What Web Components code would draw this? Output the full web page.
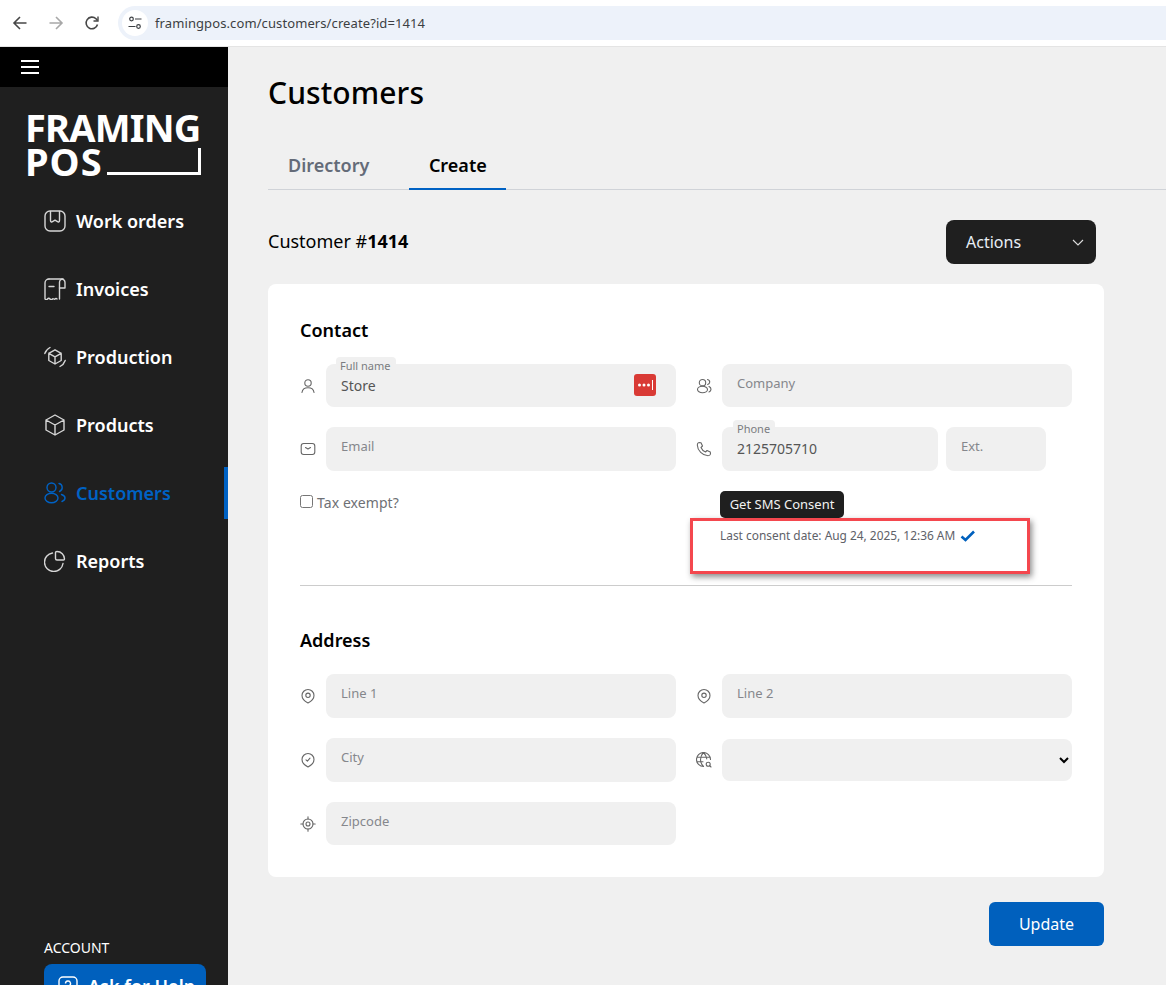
<!DOCTYPE html>
<html lang="en">
<head>
<meta charset="utf-8">
<title>Customers</title>
<style>
    html, body { margin: 0; padding: 0; background: #f0f0f0; }
    body { font-family: "Noto Sans", "Open Sans", sans-serif; }
</style>
</head>
<body>
<app-shell>
    <browser-bar slot="bar">framingpos.com/customers/create?id=1414</browser-bar>
    <side-nav slot="side">
        <nav-item icon="orders">Work orders</nav-item>
        <nav-item icon="invoice">Invoices</nav-item>
        <nav-item icon="production">Production</nav-item>
        <nav-item icon="box">Products</nav-item>
        <nav-item icon="people" active>Customers</nav-item>
        <nav-item icon="pie">Reports</nav-item>
    </side-nav>
    <customer-page slot="main"></customer-page>
</app-shell>

<script>
// 图标
const ICONS = {
    orders: '<rect x="1" y="1" width="20" height="20" rx="5"/><path d="M6.5 1.5v9c0 1.3 1 1.8 2 1.2l2.5-1.5 2.5 1.5c1 .6 2 .1 2-1.2v-9"/>',
    invoice: '<path d="M5 1h12.500a3.500 3.500 0 0 1 3.500 3.500v5.500h-5.500"/><path d="M15.500 21V4.500A3.500 3.500 0 0 1 19 1M5 1a4 4 0 0 0-4 4v16c1.200 1 1.800 1 2.500 0s1.800-1 2.500 0 1.800 1 2.500 0 1.800 1 2.500 0 1.500-.6 2 0"/><path d="M5 8.500h5"/>',
    production: '<path d="M11 3.800l6.200 3.500v7.200L11 18l-6.200-3.500V7.300zM4.800 7.300l6.200 3.600 6.200-3.600M11 10.900V18"/><path d="M.8 7.500A10.500 10.500 0 0 1 6 1.500M21.200 14.500A10.500 10.500 0 0 1 16 20.500"/>',
    box: '<path d="M11 1l9 5v10l-9 5-9-5V6zM2 6l9 5 9-5M11 11v10"/>',
    people: '<circle cx="7.500" cy="5.500" r="4.500"/><ellipse cx="7.500" cy="16" rx="6.500" ry="4.800"/><path d="M15 1.500a4.200 4.200 0 0 1 .5 8M17.500 12.500c2.500.8 3.500 2.200 3.500 3.500s-1 2.700-3 3.500"/>',
    pie: '<path d="M8.500 3A9.300 9.300 0 1 0 19 13.500"/><path d="M13 1.500a7.500 7.500 0 0 1 7.500 7.500c0 .6-.4 1-1 1H13a1.500 1.500 0 0 1-1.500-1.500V2.500c0-.6.900-1 1.500-1z"/>',
    user: '<circle cx="8" cy="5" r="3.200"/><path d="M2 14.500c.3-3 2.800-4.800 6-4.800s5.700 1.800 6 4.800"/>',
    mail: '<rect x="1.200" y="2.500" width="13.600" height="11" rx="2.500"/><path d="M5.500 6.500L8 8l2.500-1.500"/>',
    company: '<circle cx="6.500" cy="4.700" r="3.200"/><ellipse cx="6.500" cy="11.500" rx="5" ry="3.300"/><path d="M11.500 1.500c1.500.3 2.300 1.600 2.200 2.800-.1 1-.8 1.900-2 2.300M13 8.500c1.300.6 2 1.600 2 2.800s-.8 2.200-2 2.700"/>',
    phone: '<path d="M3 1.500l2 .2 1.500 3.300-1.500 1.500c.8 2 2.500 3.700 4.500 4.500l1.500-1.500 3.300 1.500.2 2c-.2 1-1.200 1.700-2.500 1.700C6.500 14.500 1.500 9.500 1.300 4c0-1.300.7-2.300 1.700-2.500z"/>',
    pin: '<path d="M8 15c-3-1.500-6-4.200-6-7.500a6 6 0 0 1 12 0C14 10.800 11 13.500 8 15z"/><circle cx="8" cy="7.300" r="2.200"/>',
    pincheck: '<path d="M8 15c-3-1.500-6-4.200-6-7.500a6 6 0 0 1 12 0C14 10.800 11 13.500 8 15z"/><path d="M6 7.800l1.400 1.300 2.600-3"/>',
    target: '<circle cx="8" cy="8" r="5"/><circle cx="8" cy="8" r="2"/><path d="M8 .8V3M8 13v2.200M.8 8H3M13 8h2.200"/>',
    globe: '<path d="M7.500 14.500a7 7 0 1 1 7-7M1 5.200h13M1 9.800h6M7.500.5c-4 4-4 10 0 14M7.500.5c2 2 3 4 3.300 6.500"/><circle cx="12.200" cy="12.200" r="2"/><path d="M13.700 13.700l1.300 1.300"/>'
};

function svgIcon(name, size) {
    const box = size > 16 ? 22 : 16;
    return `<svg width="${size}" height="${size}" viewBox="0 0 ${box} ${box}" fill="none" stroke="currentColor" stroke-width="${size > 16 ? 1.400 : 1.100}" stroke-linecap="round" stroke-linejoin="round">${ICONS[name]}</svg>`;
}

// 外壳
class AppShell extends HTMLElement {
    constructor() {
        super();
        this.attachShadow({ mode: "open" });
        this.shadowRoot.innerHTML = `
            <style>
                :host { display: block; position: relative; width: 1166px; height: 985px; overflow: hidden; background: #f0f0f0; }
                .body { display: flex; height: 938px; }
                .note {
                    position: absolute; left: 690px; top: 518px; width: 334px; height: 50px;
                    border: 3px solid #f4474e; box-shadow: 2px 3px 6px rgba(0, 0, 0, 0.45);
                }
            </style>
            <slot name="bar"></slot>
            <div class="body">
                <slot name="side"></slot>
                <slot name="main"></slot>
            </div>
            <div class="note"></div>
        `;
    }
}

// 浏览器地址栏
class BrowserBar extends HTMLElement {
    constructor() {
        super();
        this.attachShadow({ mode: "open" });
        this.shadowRoot.innerHTML = `
            <style>
                :host { display: flex; align-items: center; height: 46px; background: #fff; border-bottom: 1px solid #e4e4e4; box-sizing: content-box; }
                .nav { display: flex; align-items: center; gap: 20px; width: 106px; padding-left: 12px; box-sizing: content-box; flex: none; }
                svg { display: block; flex: none; }
                .pill {
                    flex: 1; height: 34px; margin-top: 0; background: #edf2fa; border-radius: 17px 0 0 17px;
                    display: flex; align-items: center; padding-left: 4px;
                    font: 13px "Noto Sans", sans-serif; letter-spacing: 0.100px; color: #3c3f43;
                }
                .site { width: 26px; height: 26px; border-radius: 50%; background: #fff; display: flex; align-items: center; justify-content: center; margin-right: 7px; }
            </style>
            <div class="nav">
                <svg width="16" height="16" viewBox="0 0 16 16" fill="none" stroke="#474747" stroke-width="1.600"><path d="M14.500 8H2M8 2L2 8l6 6"/></svg>
                <svg width="16" height="16" viewBox="0 0 16 16" fill="none" stroke="#a8a8a8" stroke-width="1.600"><path d="M1.500 8H14M8 2l6 6-6 6"/></svg>
                <svg width="16" height="16" viewBox="0 0 16 16" fill="none" stroke="#474747" stroke-width="1.600"><path d="M13.500 9.500A5.800 5.800 0 1 1 12 3.800L13.500 5.500"/><path d="M14 1.500v4.500H9.500" stroke-width="1.400"/></svg>
            </div>
            <div class="pill">
                <span class="site">
                    <svg width="14" height="14" viewBox="0 0 14 14" fill="none" stroke="#3c3f43" stroke-width="1.200"><circle cx="3.500" cy="3" r="1.800"/><path d="M7 3h6.500M.5 10.500h7"/><circle cx="10.500" cy="10.500" r="1.800"/></svg>
                </span>
                <slot></slot>
            </div>
        `;
    }
}

// 侧边栏
class SideNav extends HTMLElement {
    constructor() {
        super();
        this.attachShadow({ mode: "open" });
        this.shadowRoot.innerHTML = `
            <style>
                :host { display: block; width: 228px; height: 938px; background: #1f1f1f; overflow: hidden; flex: none; }
                .top { height: 40px; background: #000; display: flex; align-items: center; padding-left: 21px; }
                .burger { width: 18px; height: 14px; display: flex; flex-direction: column; justify-content: space-between; }
                .burger i { display: block; height: 2px; background: #fff; }
                .logo { height: 108px; box-sizing: border-box; padding: 24px 0 0 25px; color: #fff; font: 700 38px/32px "Noto Sans", sans-serif; letter-spacing: -0.800px; }
                .logo div { height: 34px; }
                .logo .pos { display: flex; align-items: flex-end; height: 32px; }
                .pos span:first-child { letter-spacing: 1px; }
                .frame { width: 91px; height: 24px; margin: 0 0 2px 4px; border-right: 3px solid #fff; border-bottom: 3px solid #fff; box-sizing: content-box; }
                .items { display: flex; flex-direction: column; gap: 16px; }
                .account { margin: 351px 0 0 44px; color: #fff; font: 14px/20px "Noto Sans", sans-serif; }
                .help {
                    width: 162px; height: 44px; margin: 6px 0 0 44px; background: #0060bd; border-radius: 8px; color: #fff;
                    display: flex; align-items: center; gap: 10px; padding-left: 14px; box-sizing: border-box;
                    font: 600 18px "Noto Sans", sans-serif;
                }
                .help svg { flex: none; }
            </style>
            <div class="top"><div class="burger"><i></i><i></i><i></i></div></div>
            <div class="logo">
                <div>FRAMING</div>
                <div class="pos"><span>POS</span><span class="frame"></span></div>
            </div>
            <div class="items"><slot></slot></div>
            <div class="account">ACCOUNT</div>
            <div class="help">
                <svg width="20" height="20" viewBox="0 0 20 20" fill="none" stroke="#fff" stroke-width="1.400"><rect x="1" y="1" width="18" height="18" rx="4"/><path d="M7.500 7.500a2.500 2.500 0 1 1 3.500 2.300c-.7.300-1 .8-1 1.700M10 14v.5"/></svg>
                Ask for Help
            </div>
        `;
    }
}

class NavItem extends HTMLElement {
    constructor() {
        super();
        this.attachShadow({ mode: "open" });
    }

    connectedCallback() {
        const icon = this.getAttribute("icon");
        const active = this.hasAttribute("active");
        this.shadowRoot.innerHTML = `
            <style>
                :host {
                    display: flex; align-items: center; gap: 10px; height: 52px; padding-left: 44px; position: relative;
                    color: ${active ? "#0062c4" : "#fff"}; font: 600 18px "Noto Sans", sans-serif;
                }
                :host::after {
                    content: ""; display: ${active ? "block" : "none"};
                    position: absolute; right: 0; top: 0; bottom: 0; width: 4px; background: #0062c4;
                }
                .ic { color: ${active ? "#0062c4" : "#d6d6d6"}; display: flex; }
            </style>
            <span class="ic">${svgIcon(icon, 22)}</span>
            <slot></slot>
        `;
    }
}

// 表单字段
class FormField extends HTMLElement {
    constructor() {
        super();
        this.attachShadow({ mode: "open" });
    }

    connectedCallback() {
        const icon = this.getAttribute("icon");
        const label = this.getAttribute("label");
        const value = this.getAttribute("value");
        const keeper = this.hasAttribute("keeper");
        this.shadowRoot.innerHTML = `
            <style>
                :host { display: flex; align-items: center; min-width: 0; }
                .ic { width: 26px; flex: none; color: #666; display: flex; }
                .input {
                    flex: 1; align-self: stretch; position: relative; background: #f0f0f0; border-radius: 8px;
                    box-sizing: border-box; padding: 0 15px; display: flex;
                    font: 13px "Noto Sans", sans-serif; color: #85878c;
                }
                .hint { margin-top: 10px; line-height: 19px; }
                .value { align-self: center; margin-top: -1px; font-size: 14px; color: #555; }
                .float {
                    position: absolute; left: var(--float-left, 10px); top: -7px; padding: 0 5px 0 4px; line-height: 18px; height: 16px;
                    background: #f0f0f0; border-radius: 4px 4px 0 0; font-size: 11px; color: #7a7c80;
                }
                .keeper {
                    position: absolute; right: 20px; top: 10px; width: 22px; height: 22px; border-radius: 3px; background: #d93a35;
                    display: flex; align-items: center; justify-content: center;
                }
            </style>
            ${icon ? `<span class="ic">${svgIcon(icon, 16)}</span>` : ""}
            <div class="input">
                ${value
                    ? `<span class="float">${label}</span><span class="value">${value}</span>`
                    : `<span class="hint">${label}</span>`}
                ${keeper ? `<span class="keeper"><svg width="17" height="10" viewBox="0 0 17 10" fill="#fff"><circle cx="2.500" cy="5" r="1.500"/><circle cx="7" cy="5" r="1.500"/><circle cx="11.500" cy="5" r="1.500"/><rect x="15" y="0" width="1" height="10"/></svg></span>` : ""}
            </div>
        `;
    }
}

// 标签页
class TabBar extends HTMLElement {
    constructor() {
        super();
        this.attachShadow({ mode: "open" });
        this.shadowRoot.innerHTML = `
            <style>
                :host { display: flex; gap: 20px; height: 48px; border-bottom: 1px solid #d0d3d8; font: 600 18px "Noto Sans", sans-serif; }
                div { padding: 0 20px; height: 49px; box-sizing: border-box; line-height: 48px; }
                .off { color: #646b78; }
                .on { color: #000; padding: 0 19.500px; border-bottom: 2px solid #0062c4; }
            </style>
            <div class="off">Directory</div>
            <div class="on">Create</div>
        `;
    }
}

// 客户页面
class CustomerPage extends HTMLElement {
    constructor() {
        super();
        this.attachShadow({ mode: "open" });
        this.shadowRoot.innerHTML = `
            <style>
                :host { display: block; width: 938px; box-sizing: border-box; padding: 26px 62px 0 40px; color: #000; font-family: "Noto Sans", sans-serif; }
                h1 { margin: 0 0 28px; font: 500 30px/40px "Noto Sans", sans-serif; letter-spacing: 0.100px; }
                tab-bar { margin-right: -62px; }
                .head { display: flex; justify-content: space-between; align-items: center; height: 44px; margin: 30px 8px 20px 0; font-size: 18px; }
                .head > div:first-child { padding-bottom: 2px; }
                .actions {
                    width: 150px; height: 44px; box-sizing: border-box; padding: 0 12px 0 20px; background: #1f1f1f; border-radius: 8px; color: #e8eef5;
                    display: flex; align-items: center; justify-content: space-between; font-size: 16px;
                }
                .card { height: 593px; box-sizing: border-box; background: #fff; border-radius: 8px; padding: 32px; }
                h2 { margin: 0 0 20px; font: 600 18px/28px "Noto Sans", sans-serif; }
                .grid { display: grid; grid-template-columns: 376px 376px; column-gap: 20px; row-gap: 20px; }
                .contact { grid-template-rows: 43px 44px 94px; }
                .address { grid-template-rows: 44px 44px 43px; }
                .phone { display: flex; gap: 8px; }
                .phone form-field:first-child { width: 242px; --float-left: 11px; }
                .phone form-field:last-child { width: 100px; }
                .tax { display: flex; align-items: flex-start; padding-top: 1px; font-size: 14px; letter-spacing: 0.080px; line-height: 22px; color: #6e7075; }
                .tax input { width: 13px; height: 13px; margin: 3px 4px 0 0; }
                .sms { padding-left: 24px; }
                .sms button {
                    display: block; width: 124px; height: 27px; padding: 0 0 2px; border: 0; border-radius: 5px; background: #1f1f1f; color: #f2f2f2;
                    font: 13px "Noto Sans", sans-serif;
                }
                .consent { display: flex; align-items: center; gap: 5px; margin-top: 9px; font-size: 11.900px; line-height: 17px; color: #5e6168; }
                hr { margin: 0 0 40px; border: 0; border-top: 1px solid #ccc; }
                .sel { display: flex; align-items: center; }
                .sel .ic { width: 26px; flex: none; color: #666; display: flex; }
                select { flex: 1; height: 42px; border: 0; border-radius: 8px; background-color: #f0f0f0; outline: 0; }
                .foot { display: flex; justify-content: flex-end; margin-top: 25px; }
                .update {
                    width: 115px; height: 44px; padding: 0; border: 0; border-radius: 6px; background: #0060bd; color: #fff;
                    font: 16px "Noto Sans", sans-serif;
                }
            </style>
            <h1>Customers</h1>
            <tab-bar></tab-bar>
            <div class="head">
                <div>Customer #<b>1414</b></div>
                <div class="actions">Actions
                    <svg width="12" height="12" viewBox="0 0 12 12" fill="none" stroke="#ddd" stroke-width="1.100"><path d="M1 4l5 5 5-5"/></svg>
                </div>
            </div>
            <div class="card">
                <h2>Contact</h2>
                <div class="grid contact">
                    <form-field icon="user" label="Full name" value="Store" keeper></form-field>
                    <form-field icon="company" label="Company"></form-field>
                    <form-field icon="mail" label="Email"></form-field>
                    <div class="phone">
                        <form-field icon="phone" label="Phone" value="2125705710"></form-field>
                        <form-field label="Ext."></form-field>
                    </div>
                    <label class="tax"><input type="checkbox">Tax exempt?</label>
                    <div class="sms">
                        <button>Get SMS Consent</button>
                        <div class="consent">Last consent date: Aug 24, 2025, 12:36 AM
                            <svg width="16" height="12" viewBox="0 0 16 12" fill="none" stroke="#0060bd" stroke-width="2.600"><path d="M1.500 6.500l4 3.500 8.500-8.500"/></svg>
                        </div>
                    </div>
                </div>
                <hr>
                <h2>Address</h2>
                <div class="grid address">
                    <form-field icon="pin" label="Line 1"></form-field>
                    <form-field icon="pin" label="Line 2"></form-field>
                    <form-field icon="pincheck" label="City"></form-field>
                    <div class="sel"><span class="ic">${svgIcon("globe", 16)}</span><select></select></div>
                    <form-field icon="target" label="Zipcode"></form-field>
                </div>
            </div>
            <div class="foot"><button class="update">Update</button></div>
        `;
    }
}

// 注册自定义元素
customElements.define("form-field", FormField);
customElements.define("tab-bar", TabBar);
customElements.define("nav-item", NavItem);
customElements.define("side-nav", SideNav);
customElements.define("browser-bar", BrowserBar);
customElements.define("customer-page", CustomerPage);
customElements.define("app-shell", AppShell);
</script>
</body>
</html>
